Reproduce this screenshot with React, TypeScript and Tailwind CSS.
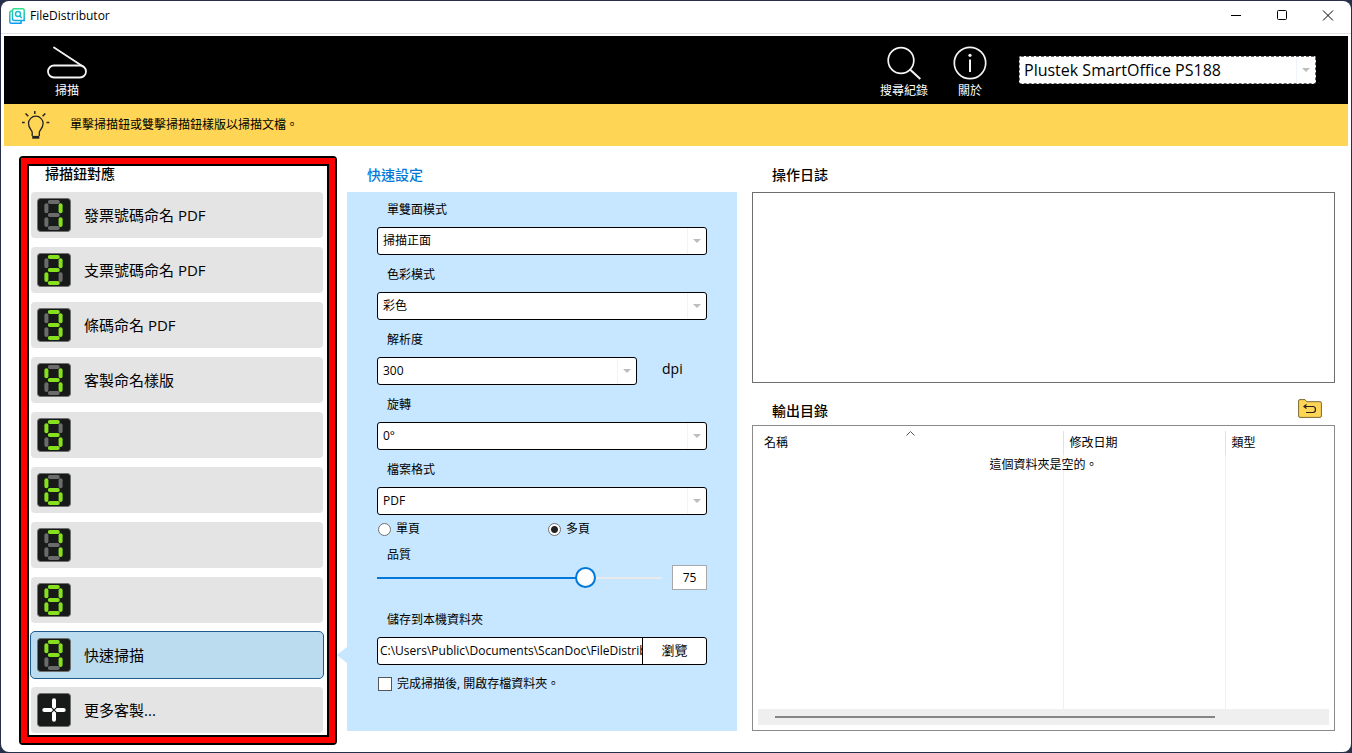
import { useState } from "react";
import type { ReactNode } from "react";
import clsx from "clsx";

const BUTTONS = [
  { digit: "1", label: "發票號碼命名 PDF" },
  { digit: "2", label: "支票號碼命名 PDF" },
  { digit: "3", label: "條碼命名 PDF" },
  { digit: "4", label: "客製命名樣版" },
  { digit: "5", label: "" },
  { digit: "6", label: "" },
  { digit: "7", label: "" },
  { digit: "8", label: "" },
  { digit: "9", label: "快速掃描" },
  { digit: "+", label: "更多客製..." },
];

// Seven segment display: a = top, clockwise to f, g = middle
const SEGMENTS: Record<string, string> = {
  a: "M12.8 4H20.8",
  b: "M23.6 7.2V13.2",
  c: "M23.6 21.2V27",
  d: "M12.8 30H20.8",
  e: "M9.4 21.2V27",
  f: "M9.4 7.2V13.2",
  g: "M12.8 17H20.8",
};

const DIGITS: Record<string, string> = {
  "1": "bc",
  "2": "abged",
  "3": "abgcd",
  "4": "fgbc",
  "5": "afgcd",
  "6": "fgcde",
  "7": "abc",
  "8": "abcdefg",
  "9": "abcfg",
};

function DigitTile({ digit }: { digit: string }) {
  const lit = DIGITS[digit] ?? "";
  return (
    <svg viewBox="0 0 34 34" className="size-[34px] shrink-0" aria-hidden="true">
      <rect x="0.5" y="0.5" width="33" height="33" rx="3" fill="#181a1a" stroke="#6f7171" />
      {digit === "+" ? (
        <>
          <path d="M17 7.3V26.7M7.3 17H26.7" stroke="#fff" strokeWidth="4" strokeLinecap="round" />
          <path d="M14.8 14.8L19.2 19.2M19.2 14.8L14.8 19.2" stroke="#181a1a" strokeWidth="1.2" />
        </>
      ) : (
        Object.keys(SEGMENTS).map((key) => (
          <path key={key} d={SEGMENTS[key]} stroke={lit.includes(key) ? "#86e01e" : "#6b6b6b"} strokeWidth="4" strokeLinecap="round" />
        ))
      )}
    </svg>
  );
}

function Arrow() {
  return (
    <span className="pointer-events-none absolute inset-y-px right-px flex w-[19px] items-center justify-center border-l border-[#eef4fa]">
      <svg viewBox="0 0 8 4" className="h-1 w-2" aria-hidden="true">
        <path d="M0 0H8L4 4Z" fill="#bdbdbd" />
      </svg>
    </span>
  );
}

function Field({ id, label, value, suffix }: { id: string; label: string; value: string; suffix?: string }) {
  return (
    <div className="mb-[11px]">
      <label htmlFor={id} className="mb-2 block pl-2.5 text-xs leading-[18px]">{label}</label>
      <div className="flex items-center">
        <div className={clsx("relative h-7", suffix ? "w-[260px]" : "w-full")}>
          <select id={id} className="block h-full w-full appearance-none rounded-[3px] border border-black bg-white pl-[5px] text-xs">
            <option>{value}</option>
          </select>
          <Arrow />
        </div>
        {suffix && <span className="pb-1 pl-[25px] text-sm leading-5">{suffix}</span>}
      </div>
    </div>
  );
}

function ToolButton({ label, children }: { label: string; children: ReactNode }) {
  return (
    <button className="flex flex-col items-center gap-[3px] text-xs leading-4 text-white">
      {children}
      <span>{label}</span>
    </button>
  );
}

function TitleBar() {
  return (
    <header className="flex h-[33px] items-center border-b border-[#e4e4e8] pb-[3px] pl-2">
      <svg viewBox="0 0 16 16" className="size-4" fill="none" aria-hidden="true">
        <defs>
          <linearGradient id="logo" x1="0" y1="0" x2="0" y2="1">
            <stop offset="0" stopColor="#2fe08c" />
            <stop offset="1" stopColor="#0a9cf5" />
          </linearGradient>
        </defs>
        <path d="M4.5 0.8H13.5Q15.2 0.8 15.2 2.5V12.5H5.5Q3.5 12.5 3.5 10.5V1.8ZM3.5 3H2.3Q0.8 3 0.8 4.5V13.7Q0.8 15.2 2.3 15.2H12V12.5" stroke="url(#logo)" strokeWidth="1.5" />
        <circle cx="9" cy="6" r="2.5" stroke="#14bfd0" strokeWidth="1.4" />
        <path d="M10.6 7.8L12.8 10" stroke="#14bfd0" strokeWidth="1.4" />
      </svg>
      <h1 className="ml-[5px] flex-1 text-xs leading-4">FileDistributor</h1>
      <button aria-label="最小化" className="flex h-7 w-[46px] items-center justify-center">
        <svg viewBox="0 0 12 12" className="size-3"><path d="M1 5.5H11" stroke="#000" /></svg>
      </button>
      <button aria-label="最大化" className="flex h-7 w-[46px] items-center justify-center">
        <svg viewBox="0 0 12 12" className="size-3"><rect x="1.5" y="0.5" width="9" height="9" rx="1" fill="none" stroke="#000" /></svg>
      </button>
      <button aria-label="關閉" className="flex h-7 w-[46px] items-center justify-center">
        <svg viewBox="0 0 12 12" className="size-3"><path d="M1 0.5L11 10.5M11 0.5L1 10.5" stroke="#000" /></svg>
      </button>
    </header>
  );
}

function Toolbar() {
  return (
    <div className="flex h-[68px] items-center bg-black pt-[5px] pr-8 pl-[43px]">
      <ToolButton label="掃描">
        <svg viewBox="0 0 40 34" className="h-[34px] w-10" fill="none" stroke="#f4f4f4" strokeWidth="1.8" aria-hidden="true">
          <rect x="1" y="19.5" width="38" height="12" rx="6" />
          <path d="M7 1.5L36 20.5" strokeLinecap="round" />
        </svg>
      </ToolButton>
      <div className="ml-auto flex items-center gap-[25px]">
        <ToolButton label="搜尋紀錄">
          <svg viewBox="0 0 34 34" className="size-[34px]" fill="none" stroke="#f4f4f4" strokeWidth="1.7" aria-hidden="true">
            <circle cx="14" cy="14.5" r="12.8" />
            <path d="M23 23.5L33.3 33" strokeWidth="2" />
          </svg>
        </ToolButton>
        <ToolButton label="關於">
          <svg viewBox="0 0 34 34" className="size-[34px]" fill="none" stroke="#f4f4f4" strokeWidth="1.7" aria-hidden="true">
            <circle cx="17" cy="17" r="15.7" />
            <path d="M17 13.5V26" strokeWidth="2" />
            <circle cx="17" cy="9.3" r="1.6" fill="#f4f4f4" stroke="none" />
          </svg>
        </ToolButton>
      </div>
      <div className="relative mb-[5px] ml-8 h-7 w-[297px]">
        <select aria-label="掃描器" className="block h-full w-full appearance-none rounded-[2px] border border-dashed border-[#666] bg-white pl-1 text-base">
          <option>Plustek SmartOffice PS188</option>
        </select>
        <Arrow />
      </div>
    </div>
  );
}

function Hint() {
  return (
    <div className="flex h-[42px] items-center bg-[#ffd556] pl-[17px]">
      <svg viewBox="0 0 30 30" className="size-[30px]" fill="none" stroke="#222" strokeWidth="1.3" aria-hidden="true">
        <path d="M11.2 26V22.5C11.2 20 7.5 18.5 7.5 13.5A7.3 7.3 0 0 1 22.1 13.5C22.1 18.5 18.3 20 18.3 22.5V26" />
        <path d="M11.2 27.3H18.3" strokeWidth="2.8" />
        <path d="M1 12.5H3.7M25.5 12.5H28.3M13.8 1V4M4.5 3.5L7.3 6.3M24.3 3.5L21.6 6.3" strokeWidth="1.5" />
      </svg>
      <p className="ml-[19px] text-xs leading-4">單擊掃描鈕或雙擊掃描鈕樣版以掃描文檔。</p>
    </div>
  );
}

function ButtonList() {
  const [active, setActive] = useState("9");
  return (
    <nav className="w-[318px] shrink-0 rounded-[4px] border-2 border-black bg-black">
      <div className="h-full border-[6px] border-[#fe0000]">
        <div className="h-full border-2 border-black bg-white">
          <h2 className="mb-[9px] pl-4 text-sm leading-4 font-medium">掃描鈕對應</h2>
          <ul className="flex flex-col gap-[7px]">
            {BUTTONS.map((item) => (
              <li key={item.digit} className="pr-[3px] pl-px">
                <button
                  onClick={() => setActive(item.digit)}
                  className={clsx(
                    "flex h-12 w-full items-center gap-[13px] rounded-[5px] border pl-1.5 text-[15px]",
                    active === item.digit ? "border-[#1e5a8c] bg-[#badcee]" : "border-transparent bg-[#e4e4e4] bg-clip-padding"
                  )}
                >
                  <DigitTile digit={item.digit} />
                  <span>{item.label}</span>
                </button>
              </li>
            ))}
          </ul>
        </div>
      </div>
    </nav>
  );
}

function QuickSettings() {
  const [quality, setQuality] = useState(75);
  return (
    <section className="ml-2.5 flex w-[390px] shrink-0 flex-col pb-3.5">
      <h2 className="pt-[9px] pb-[7px] pl-5 text-sm leading-5 font-medium text-[#0078d7]">快速設定</h2>
      <div className="relative flex-1 bg-[#c7e6ff] px-[30px] pt-[9px]">
        <svg viewBox="0 0 10 16" className="absolute right-full bottom-[68px] h-4 w-2.5" aria-hidden="true">
          <path d="M10 0V16L0 8Z" fill="#c7e6ff" />
        </svg>
        <Field id="side" label="單雙面模式" value="掃描正面" />
        <Field id="color" label="色彩模式" value="彩色" />
        <Field id="resolution" label="解析度" value="300" suffix="dpi" />
        <Field id="rotation" label="旋轉" value="0°" />
        <Field id="format" label="檔案格式" value="PDF" />
        <div className="-mt-1.5 grid grid-cols-[170px_1fr] text-xs leading-[18px]">
          {["單頁", "多頁"].map((page) => (
            <label key={page} className="flex items-center gap-[5px] pl-px">
              <input
                type="radio"
                name="page"
                defaultChecked={page === "多頁"}
                className="size-[13px] appearance-none rounded-full border border-[#707070] bg-white checked:bg-[radial-gradient(circle,#222_3px,#fff_4px)]"
              />
              {page}
            </label>
          ))}
        </div>
        <label htmlFor="quality" className="mt-2 block pl-2.5 text-xs leading-[18px]">品質</label>
        <div className="flex items-center gap-2.5">
          <div className="relative flex h-[27px] flex-1 items-center">
            <div className="absolute inset-x-0 h-0.5 bg-[#e8eaec]">
              <div className="h-full bg-[#0078d7]" style={{ width: `${quality}%` }} />
            </div>
            <input
              id="quality"
              type="range"
              value={quality}
              onChange={(e) => setQuality(Number(e.target.value))}
              className="relative w-full appearance-none bg-transparent [&::-webkit-slider-thumb]:size-[21px] [&::-webkit-slider-thumb]:appearance-none [&::-webkit-slider-thumb]:rounded-full [&::-webkit-slider-thumb]:border-2 [&::-webkit-slider-thumb]:border-solid [&::-webkit-slider-thumb]:border-[#0078d7] [&::-webkit-slider-thumb]:bg-white"
            />
          </div>
          <input
            aria-label="品質數值"
            value={quality}
            onChange={(e) => setQuality(Number(e.target.value) || 0)}
            className="h-[25px] w-[35px] border border-[#a8a8a8] bg-white text-center text-xs"
          />
        </div>
        <label htmlFor="folder" className="mt-5 mb-2 block pl-2.5 text-xs leading-[18px]">儲存到本機資料夾</label>
        <div className="flex h-7 overflow-hidden rounded-[3px] border border-black bg-white text-xs">
          <input id="folder" defaultValue="C:\Users\Public\Documents\ScanDoc\FileDistributor" className="min-w-0 flex-1 pl-0.5" />
          <button className="w-16 border-l border-black text-[13px]">瀏覽</button>
        </div>
        <label className="mt-2.5 flex items-center gap-[5px] pl-px text-xs leading-[18px]">
          <input type="checkbox" className="size-3.5 appearance-none border border-[#555] bg-white checked:bg-[#0078d7]" />
          完成掃描後, 開啟存檔資料夾。
        </label>
      </div>
    </section>
  );
}

function OutputPane() {
  return (
    <section className="ml-[15px] flex min-w-0 flex-1 flex-col pb-3.5">
      <h2 className="pt-[9px] pb-[7px] pl-5 text-sm leading-5 font-medium">操作日誌</h2>
      <div className="h-[191px] border border-[#6f6f6f]" />
      <div className="flex h-[42px] items-center justify-between pt-2.5 pr-[13px] pl-5">
        <h2 className="pt-1 text-sm leading-5 font-medium">輸出目錄</h2>
        <button aria-label="上一層">
          <svg viewBox="0 0 24 20" className="h-5 w-6" fill="none" aria-hidden="true">
            <path d="M0.6 2Q0.6 0.6 2 0.6H7L8.7 2.7H22Q23.4 2.7 23.4 4.1V17Q23.4 18.4 22 18.4H2Q0.6 18.4 0.6 17Z" fill="#ffd556" stroke="#7a6a30" />
            <path d="M6 7.5H15Q17.5 7.5 17.5 10.5Q17.5 13.5 15 13.5H8M8.5 5.5L6 7.5L8.5 9.5" stroke="#222" strokeWidth="1.2" />
          </svg>
        </button>
      </div>
      <div className="relative flex flex-1 flex-col border border-[#8a8a8a] px-[5px] pt-[5px] pb-[5px]">
        <table className="w-full flex-1 table-fixed text-left text-xs">
          <thead>
            <tr className="h-6">
              <th className="relative w-[305px] border-r border-[#e2e2e2] pl-1.5 font-normal">
                名稱
                <svg viewBox="0 0 9 5" className="absolute inset-x-0 top-0 mx-auto h-[5px] w-[9px]" aria-hidden="true">
                  <path d="M0.5 4.5L4.5 0.5L8.5 4.5" fill="none" stroke="#555" />
                </svg>
              </th>
              <th className="w-[162px] border-r border-[#e2e2e2] pl-1.5 font-normal">修改日期</th>
              <th className="pl-1.5 font-normal">類型</th>
            </tr>
          </thead>
          <tbody>
            <tr>
              <td className="border-r border-[#e8f2fd]" />
              <td className="border-r border-[#e8f2fd]" />
              <td />
            </tr>
          </tbody>
        </table>
        <p className="absolute inset-x-0 top-[31px] text-center text-xs leading-4">這個資料夾是空的。</p>
        <div className="h-4 bg-[#efefef] px-[17px] py-[7px]">
          <div className="h-0.5 w-[82%] bg-[#868686]" />
        </div>
      </div>
    </section>
  );
}

export default function App() {
  return (
    <div lang="zh-Hant" className="flex min-h-screen flex-col bg-[#27304a] p-px font-['Open_Sans','Noto_Sans_CJK_TC',sans-serif] text-black">
      <div className="flex flex-1 flex-col rounded-lg bg-white">
        <TitleBar />
        <div className="flex flex-1 flex-col px-[3px] pt-0.5">
          <Toolbar />
          <Hint />
          <main className="flex flex-1 pt-2.5 pr-[13px] pb-[7px] pl-[15px]">
            <ButtonList />
            <QuickSettings />
            <OutputPane />
          </main>
        </div>
      </div>
    </div>
  );
}
